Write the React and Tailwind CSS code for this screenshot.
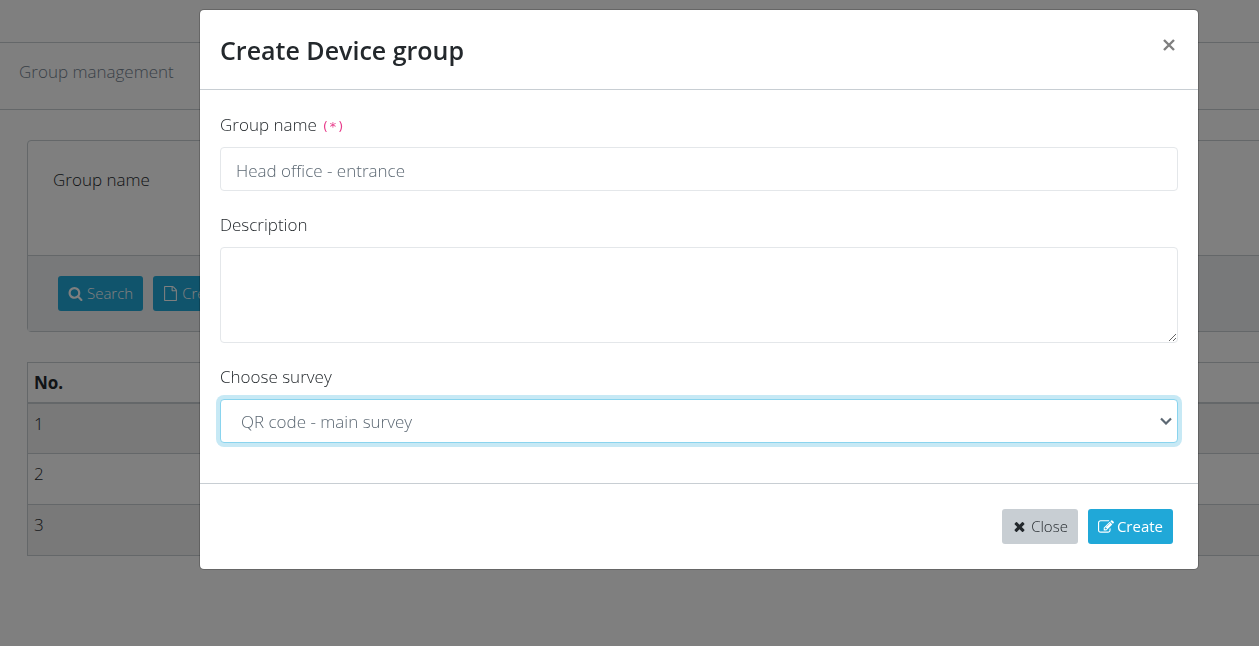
import React from "react";

const icons = {
  search:
    "M1216 832q0-185-131.5-316.5t-316.5-131.5-316.5 131.5-131.5 316.5 131.5 316.5 316.5 131.5 316.5-131.5 131.5-316.5zm512 832q0 52-38 90t-90 38q-54 0-90-38l-343-342q-179 124-399 124-143 0-273.5-55.5t-225-150-150-225-55.5-273.5 55.5-273.5 150-225 225-150 273.5-55.5 273.5 55.5 225 150 150 225 55.5 273.5q0 220-124 399l343 343q37 37 37 90z",
  file:
    "M1596 380q28 28 48 76t20 88v1152q0 40-28 68t-68 28h-1344q-40 0-68-28t-28-68v-1600q0-40 28-68t68-28h896q40 0 88 20t76 48zm-444-244v376h376q-10-29-22-41l-313-313q-12-12-41-22zm384 1528v-1024h-416q-40 0-68-28t-28-68v-416h-768v1536h1280z",
  times:
    "M1490 1322q0 40-28 68l-136 136q-28 28-68 28t-68-28l-294-294-294 294q-28 28-68 28t-68-28l-136-136q-28-28-28-68t28-68l294-294-294-294q-28-28-28-68t28-68l136-136q28-28 68-28t68 28l294 294 294-294q28-28 68-28t68 28l136 136q28 28 28 68t-28 68l-294 294 294 294q28 28 28 68z",
  edit:
    "M888 1184l116-116-152-152-116 116v56h96v96h56zm440-720q-16-16-33 1l-350 350q-17 17-1 33t33-1l350-350q17-17 1-33zm80 594v190q0 119-84.5 203.5t-203.5 84.5h-832q-119 0-203.5-84.5t-84.5-203.5v-832q0-119 84.5-203.5t203.5-84.5h832q63 0 117 25 15 7 18 23 3 17-9 29l-49 49q-14 14-32 8-23-6-45-6h-832q-66 0-113 47t-47 113v832q0 66 47 113t113 47h832q66 0 113-47t47-113v-126q0-13 9-22l64-64q15-15 35-7t20 29zm-96-738l288 288-672 672h-288v-288zm444 132l-92 92-288-288 92-92q28-28 68-28t68 28l152 152q28 28 28 68t-28 68z",
};

function Icon({ name, className }) {
  return (
    <svg viewBox="0 0 1792 1792" fill="currentColor" aria-hidden="true" className={className}>
      <path d={icons[name]} />
    </svg>
  );
}

const button = "flex h-[35px] items-center rounded-[3px] text-[15px] ";
const label = "mb-2 block text-[17px] leading-7 text-[#23282c]";
const field = "block w-full rounded border bg-white text-[17px] text-[#5c6873] outline-none ";

function GroupPage() {
  return (
    <div className="-mr-8 text-[#23282c]">
      <header className="h-[42px] bg-white" />
      <nav aria-label="Breadcrumb" className="flex h-[68px] items-center border-y border-[#c8ced3] px-[19px] pb-2 text-[#73818f]">
        Group management
      </nav>
      <main className="pt-[30px] pl-[27px]">
        <section className="rounded border border-[#c8ced3]">
          <div className="h-[114px] px-[25px] pt-[25px] leading-7">Group name</div>
          <div className="flex gap-[10px] border-t border-[#c8ced3] bg-[#f0f3f5] px-[30px] py-5">
            <button type="button" className={button + "gap-1 bg-[#20a8d8] px-[10px] text-white"}>
              <Icon name="search" className="size-[15px]" />
              Search
            </button>
            <button type="button" className={button + "gap-1 bg-[#20a8d8] px-[10px] text-white"}>
              <Icon name="file" className="size-[15px]" />
              Create
            </button>
          </div>
        </section>
        <table className="mt-[30px] w-full border-collapse border border-[#c8ced3] text-left">
          <thead>
            <tr className="h-10 border-b-2 border-[#c8ced3]">
              <th className="px-[6px] font-bold">No.</th>
            </tr>
          </thead>
          <tbody>
            {[1, 2, 3].map((n) => (
              <tr key={n} className="h-[51px] border-b border-[#c8ced3] align-top odd:bg-[#f2f2f2]">
                <td className="px-[6px] pt-[6px] leading-7">{n}</td>
              </tr>
            ))}
          </tbody>
        </table>
      </main>
    </div>
  );
}

function CreateGroupDialog() {
  return (
    <div className="fixed inset-0 overflow-y-auto bg-black/50 pt-[9px] pr-[60px] pl-[199px]">
      <form
        role="dialog"
        aria-modal="true"
        aria-labelledby="dialog-title"
        className="rounded-[5px] border border-black/20 bg-white bg-clip-padding"
        onSubmit={(e) => e.preventDefault()}
      >
        <div className="flex h-20 items-start justify-between border-b border-[#c8ced3] px-5 pt-[22px]">
          <h1 id="dialog-title" className="text-[25px] leading-9 font-semibold text-[#23282c]">
            Create Device group
          </h1>
          <button type="button" aria-label="Close dialog" className="grid h-[26px] w-[18px] place-items-center text-[#7f7f7f]">
            <svg viewBox="0 0 12 12" className="size-3" fill="none" stroke="currentColor" strokeWidth="2.4" aria-hidden="true">
              <path d="M1 1 11 11M11 1 1 11" />
            </svg>
          </button>
        </div>

        <div className="px-5 pt-[21px] pb-10">
          <label htmlFor="group-name" className={label}>
            Group name <span className="font-['DejaVu_Sans_Mono',monospace] text-[13px] leading-none text-[#e83e8c]">(*)</span>
          </label>
          <input id="group-name" type="text" defaultValue="Head office - entrance" className={field + "h-11 border-[#e4e7ea] px-[15px] pt-[2px]"} />

          <label htmlFor="description" className={label + " mt-5"}>
            Description
          </label>
          <textarea id="description" className={field + "h-24 resize border-[#e4e7ea] px-[15px] py-2"} />

          <label htmlFor="survey" className={label + " mt-5"}>
            Choose survey
          </label>
          <div className="relative">
            <select id="survey" className={field + "h-11 appearance-none border-[#8ad4ee] pr-8 pl-5 pt-[2px] ring-4 ring-[#c7e9f5]"}>
              <option>QR code - main survey</option>
            </select>
            <svg
              viewBox="0 0 12 8"
              className="pointer-events-none absolute inset-y-0 right-[6px] my-auto h-2 w-3 text-[#5c6873]"
              fill="none"
              stroke="currentColor"
              strokeWidth="2.2"
              aria-hidden="true"
            >
              <path d="M1 1.5 6 6.5 11 1.5" />
            </svg>
          </div>
        </div>

        <div className="flex justify-end gap-[10px] border-t border-[#c8ced3] p-[25px]">
          <button type="button" className={button + "gap-1 bg-[#c8ced3] px-[10px] text-[#23282c]"}>
            <Icon name="times" className="size-[15px]" />
            Close
          </button>
          <button type="submit" className={button + "gap-[3px] bg-[#20a8d8] px-[10px] font-normal text-white"}>
            <Icon name="edit" className="size-4" />
            Create
          </button>
        </div>
      </form>
    </div>
  );
}

export default function App() {
  return (
    <div className="min-h-screen overflow-x-hidden bg-white font-['Open_Sans','Noto_Sans',sans-serif] text-[17px] font-light">
      <GroupPage />
      <CreateGroupDialog />
    </div>
  );
}
